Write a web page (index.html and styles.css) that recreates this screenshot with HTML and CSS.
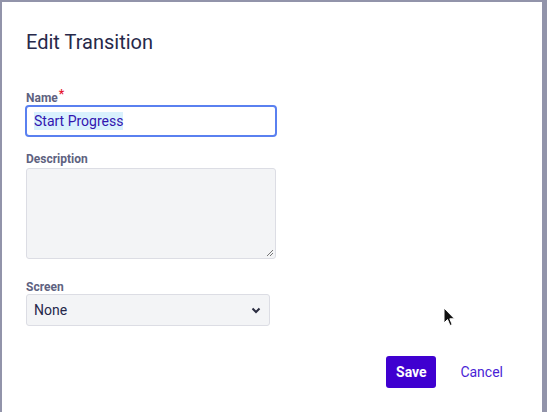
FILE: index.html
```html
<!DOCTYPE html>
<html>
<head>
<meta charset="utf-8">
<link rel="stylesheet" href="styles.css">
</head>
<body>
<div class="backdrop">
  <div class="modal">
    <h1 class="title">Edit Transition</h1>
    <div class="field field-name">
      <label class="label">Name<span class="req">*</span></label>
      <div class="input focused"><span class="sel">Start Progress</span></div>
    </div>
    <div class="field field-desc">
      <label class="label">Description</label>
      <div class="textarea">
        <svg class="grip" width="8" height="8" viewBox="0 0 8 8"><path d="M7 1 L1 7 M7 4 L4 7" stroke="#777" stroke-width="1" fill="none"/></svg>
      </div>
    </div>
    <div class="field field-screen">
      <label class="label">Screen</label>
      <div class="select"><span>None</span>
        <svg class="chev" width="10" height="7" viewBox="0 0 10 7"><path d="M1.5 1.5 L5 5 L8.5 1.5" stroke="#2a2c40" stroke-width="2" fill="none"/></svg>
      </div>
    </div>
    <div class="actions">
      <button class="btn-save">Save</button>
      <button class="btn-cancel">Cancel</button>
    </div>
  </div>
  <svg class="cursor" width="14" height="22" viewBox="0 0 14 22"><path d="M1 1 L1 16 L4.5 12.5 L7 18.5 L9.2 17.6 L6.8 11.8 L11.5 11.8 Z" fill="#111" stroke="#fff" stroke-width="1"/></svg>
</div>
</body>
</html>
```
FILE: styles.css
```css
* { box-sizing: border-box; }
html, body { margin: 0; padding: 0; }
body {
  width: 547px;
  height: 412px;
  overflow: hidden;
  background: #9294aa;
  font-family: Roboto, "Liberation Sans", sans-serif;
}
.backdrop {
  position: relative;
  width: 547px;
  height: 412px;
  padding: 2px 5px 0 2px;
}
.modal {
  background: #fff;
  width: 540px;
  height: 420px;
  padding: 28px 24px 0 24px;
}
.title {
  margin: 0;
  font-size: 20px;
  font-weight: 400;
  line-height: 24px;
  color: #27294a;
}
.field { display: flex; flex-direction: column; }
.field-name { margin-top: 37px; }
.field-desc { margin-top: 15px; }
.field-screen { margin-top: 21px; }
.label {
  font-size: 12px;
  font-weight: 700;
  color: #5e6280;
  line-height: 14px;
  margin-bottom: 2px;
}
.field-name .label, .field-screen .label { margin-bottom: 0; }
.req { color: #e5172f; font-size: 12px; position: relative; top: -4px; margin-left: 1px; }
.input {
  width: 252px;
  height: 32px;
  border: 2px solid #5a80f0;
  border-radius: 4px;
  padding: 0 7px;
  display: flex;
  align-items: center;
  margin-left: -1px;
}
.sel {
  background: #d9f1fd;
  color: #3216b0;
  font-size: 14px;
  line-height: 18px;
}
.textarea {
  position: relative;
  width: 250px;
  height: 91px;
  background: #f3f4f6;
  border: 1px solid #dcdde4;
  border-radius: 3px;
}
.grip { position: absolute; right: 1px; bottom: 1px; }
.select {
  width: 244px;
  height: 32px;
  background: #f3f4f6;
  border: 1px solid #dcdde4;
  border-radius: 3px;
  display: flex;
  align-items: center;
  justify-content: space-between;
  padding: 0 8px 0 7px;
  font-size: 14px;
  color: #25274a;
}
.actions {
  display: flex;
  justify-content: flex-end;
  align-items: center;
  margin-top: 30px;
  gap: 7px;
}
.btn-save {
  background: #3f00d0;
  color: #fff;
  border: none;
  border-radius: 3px;
  height: 32px;
  width: 50px;
  font-family: inherit;
  font-size: 14px;
  font-weight: 700;
  padding: 0;
}
.btn-cancel {
  background: transparent;
  border: none;
  color: #4a1fd6;
  font-family: inherit;
  font-size: 14px;
  padding: 0 15px 0 17px;
  height: 32px;
}
.cursor { position: absolute; left: 443px; top: 307px; }
```
